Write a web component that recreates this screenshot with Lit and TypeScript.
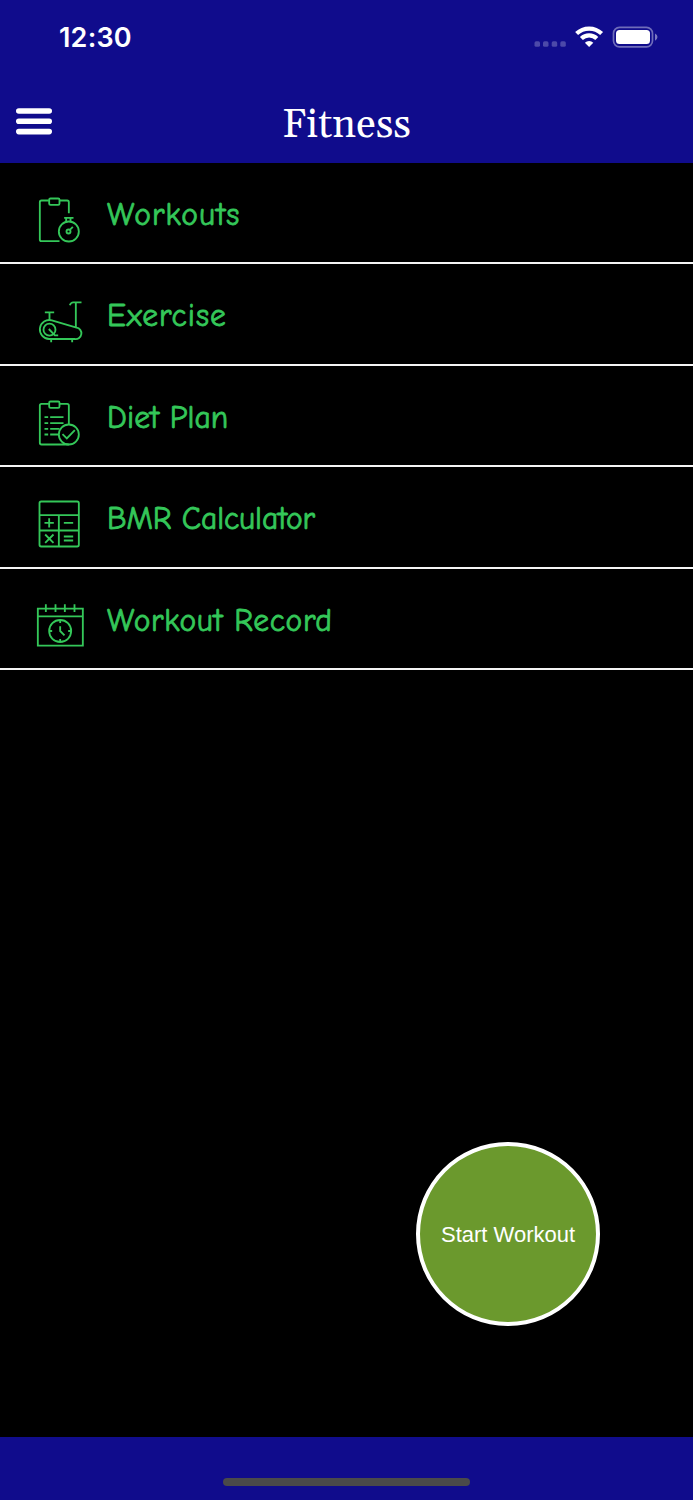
import { LitElement, html, svg, css } from "lit";
import { customElement, property } from "lit/decorators.js";
import { styleMap } from "lit/directives/style-map.js";

// Icon artwork is drawn in units of a third of a pixel.
const icons: Record<string, { box: string; art: unknown }> = {
  workouts: {
    box: "49.5 45.5 150 150",
    art: svg`
      <path d="M88 62H66a5 5 0 0 0-5 5v112a5 5 0 0 0 5 5h54M120 62h23a5 5 0 0 1 5 5v33"/>
      <rect x="89" y="56" width="31" height="19" rx="4"/>
      <circle cx="148" cy="155" r="30"/>
      <path d="M134 114h28M140 115v10M153 115v10"/>
      <circle cx="147" cy="155" r="6"/><path d="M151 150l9-9"/>`,
  },
  exercise: {
    box: "49.5 35 150 150",
    art: svg`
      <path d="M76 81h28M90 81v24M151 60q3-9 10-9h25M169 52v75"/>
      <path d="M97 105l74 22a17 17 0 0 1-5 34H89a28.500 28.500 0 1 1 8-56z"/>
      <circle cx="90" cy="133" r="18"/>
      <path d="M88 131l18 19h10M95 162v9M158 162v9"/>`,
  },
  diet: {
    box: "49.5 39.5 150 150",
    art: svg`
      <path d="M88 57H66a5 5 0 0 0-5 5v112a5 5 0 0 0 5 5h82M120 57h23a5 5 0 0 1 5 5v56"/>
      <rect x="89" y="50" width="31" height="19" rx="4"/>
      <path d="M75 97h11M92 97h40M75 115h11M92 115h40M75 132h11M92 132h28M75 149h11M92 149h25"/>
      <circle cx="148" cy="149" r="30"/>
      <path d="M129 148l13 13 24-25"/>`,
  },
  bmr: {
    box: "49.5 44.5 150 150",
    art: svg`
      <rect x="60" y="49" width="118" height="135" rx="5"/>
      <path d="M60 90h118M60 136h118M118 90v94"/>
      <path d="M75 113h28M89 99v28M133 113h28M77 148l25 25M102 148l-25 25M133 154h28M133 166h28"/>`,
  },
  record: {
    box: "48.5 33 150 150",
    art: svg`
      <path d="M54 56h135v111H54zM54 79h135M78 43v23M107 43v23M135 43v23M164 43v23"/>
      <circle cx="121" cy="123" r="33"/>
      <path d="M121 109v14l13 13M121 90v9M121 147v9M88 123h9M145 123h9"/>`,
  },
};

@customElement("menu-row")
class MenuRow extends LitElement {
  @property() icon = "";
  @property() label = "";
  @property({ type: Number }) tracking = 0;

  static styles = css`
    :host {
      display: flex;
      box-sizing: border-box;
      height: 101.5px;
      padding-left: 36px;
      border-bottom: 2px solid #f4f4f4;
      color: #34c759;
    }
    .icon {
      width: 50px;
      height: 50px;
      margin-top: 32.5px;
      fill: none;
      stroke: currentColor;
      stroke-width: 5.5;
      stroke-linecap: butt;
    }
    .label {
      margin: 31px 0 0 21px;
      font: 31.5px/42px "Chalkboard SE", "Comic Sans MS", "Comic Neue", "Open Sans", sans-serif;
      -webkit-text-stroke: 0.8px currentColor;
      white-space: nowrap;
    }
  `;

  render() {
    const { box, art } = icons[this.icon];
    return html`<svg class="icon" viewBox=${box}>${art}</svg>
      <span class="label" style=${styleMap({ letterSpacing: `${this.tracking}px` })}>${this.label}</span>`;
  }
}

@customElement("app-root")
class AppRoot extends LitElement {
  static styles = css`
    :host {
      display: flex;
      flex-direction: column;
      height: 1500px;
      background: #000;
      color: #fff;
      overflow: hidden;
    }
    .top {
      height: 162.5px;
      background: #100c8c;
    }
    .status {
      display: flex;
      justify-content: space-between;
      height: 74px;
      padding: 0 35px 0 59px;
    }
    .time {
      font: 600 27px/76px Inter, sans-serif;
      letter-spacing: 0.2px;
    }
    .signals {
      width: 125px;
      height: 30px;
      margin-top: 22px;
    }
    .bar {
      display: grid;
      grid-template-columns: 1fr auto 1fr;
      align-items: start;
      padding: 0 16px;
    }
    .menu {
      width: 36px;
      height: 27px;
      margin-top: 34px;
    }
    .title {
      margin: 27px 0 0;
      font: 40px/50px Georgia, Gelasio, "Liberation Serif", serif;
      letter-spacing: 0.3px;
    }
    .main {
      flex: 1;
      display: flex;
      flex-direction: column;
      justify-content: space-between;
    }
    .start {
      align-self: flex-end;
      box-sizing: border-box;
      width: 184px;
      height: 184.600px;
      margin: 0 93px 110.700px 0;
      padding: 2px 0 0;
      border: 4px solid #fff;
      border-radius: 50%;
      background: #6b992d;
      color: #fff;
      font: 22px "Liberation Sans", sans-serif;
    }
    .foot {
      display: flex;
      justify-content: center;
      height: 63px;
      background: #100c8c;
    }
    .home {
      width: 247px;
      height: 8px;
      margin-top: 41px;
      border-radius: 4px;
      background: #4a4a4a;
    }
  `;

  render() {
    const rows: [string, string, number][] = [
      ["workouts", "Workouts", 1.1],
      ["exercise", "Exercise", 1],
      ["diet", "Diet Plan", 0.1],
      ["bmr", "BMR Calculator", -0.1],
      ["record", "Workout Record", 0.65],
    ];
    return html`
      <header class="top">
        <div class="status">
          <span class="time">12:30</span>
          <svg class="signals" viewBox="533 22 125 30" fill="none">
            <g fill="#fff" fill-opacity=".25">
              <rect x="534.500" y="41.300" width="5.500" height="5.500" rx="1.600" />
              <rect x="543" y="41.300" width="5.500" height="5.500" rx="1.600" />
              <rect x="551.700" y="41.300" width="5.500" height="5.500" rx="1.600" />
              <rect x="560.300" y="41.300" width="5.500" height="5.500" rx="1.600" />
            </g>
            <g stroke="#fff" stroke-width="4.200">
              <path d="M576.600 33.600a18 18 0 0 1 25 0" />
              <path d="M581.400 38.500a11 11 0 0 1 15.400 0" />
            </g>
            <path d="M589.100 47l-4.200-4.300a6 6 0 0 1 8.400 0z" fill="#fff" />
            <rect x="613.500" y="27.300" width="39" height="19.500" rx="6" stroke="#fff" stroke-opacity=".4" stroke-width="1.700" />
            <rect x="616" y="29.900" width="34" height="14.200" rx="3.500" fill="#fff" />
            <path d="M655 33.500q2.500 1.200 2.500 3.600t-2.500 3.600z" fill="#fff" fill-opacity=".45" />
          </svg>
        </div>
        <div class="bar">
          <svg class="menu" viewBox="0 0 36 27" fill="#fff">
            <rect y=".2" width="36" height="5.600" rx="2.800" />
            <rect y="10.500" width="36" height="5.600" rx="2.800" />
            <rect y="20.800" width="36" height="5.600" rx="2.800" />
          </svg>
          <h1 class="title">Fitness</h1>
        </div>
      </header>
      <main class="main">
        <nav>
          ${rows.map(
            ([icon, label, tracking]) =>
              html`<menu-row icon=${icon} label=${label} tracking=${tracking}></menu-row>`
          )}
        </nav>
        <button class="start">Start Workout</button>
      </main>
      <footer class="foot"><div class="home"></div></footer>
    `;
  }
}
